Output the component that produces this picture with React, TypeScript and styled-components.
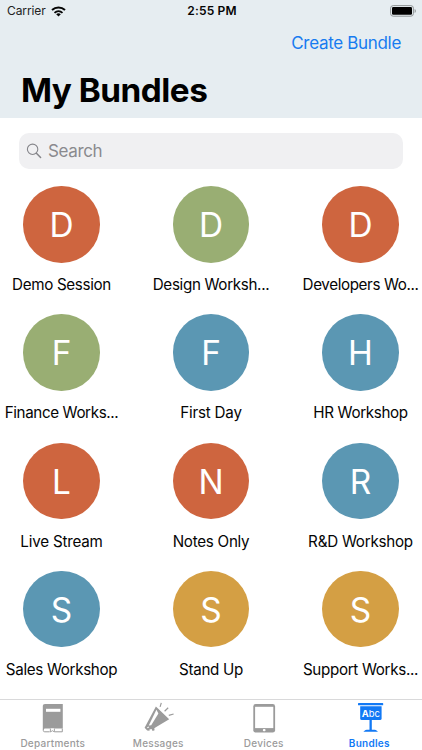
import React from "react";
import styled, { createGlobalStyle } from "styled-components";

const GlobalStyle = createGlobalStyle`
  * { box-sizing: border-box; }
  html, body { margin: 0; padding: 0; background: #fff; }
  body { font-family: Inter, "Liberation Sans", sans-serif; color: #050505; overflow: hidden; }
  button, input { font: inherit; border: 0; background: none; padding: 0; margin: 0; }
`;

const Screen = styled.div`
  width: 422px;
  height: 750px;
  display: flex;
  flex-direction: column;
  overflow: hidden;
  background: #fff;
`;

const Header = styled.header`
  height: 118px;
  flex: none;
  display: flex;
  flex-direction: column;
  background: #e6edf1;
`;

const StatusBar = styled.div`
  height: 22px;
  display: grid;
  grid-template-columns: 1fr auto 1fr;
  align-items: center;
  padding: 0 5px 0 7px;
  font-size: 12px;
  line-height: 22px;
  svg { display: block; }
`;

const Carrier = styled.div`
  display: flex;
  align-items: center;
  gap: 5px;
  letter-spacing: -0.1px;
  color: #222;
`;

const Clock = styled.div`
  font-weight: 600;
  letter-spacing: 0.15px;
  color: #050505;
`;

const BatterySlot = styled.div`
  display: flex;
  justify-content: flex-end;
`;

const NavActions = styled.div`
  height: 44px;
  display: flex;
  justify-content: flex-end;
  align-items: center;
  padding: 0 21px 2px 0;
`;

const CreateButton = styled.button`
  font-size: 17px;
  line-height: 22px;
  letter-spacing: -0.32px;
  color: #177bf0;
`;

const Title = styled.h1`
  margin: 2px 0 0 21px;
  font-size: 33.3px;
  line-height: 44px;
  font-weight: 700;
  letter-spacing: -0.5px;
  color: #000;
`;

const SearchBox = styled.label`
  flex: none;
  display: flex;
  align-items: center;
  height: 36px;
  margin: 15px 19px 0;
  padding-left: 7px;
  gap: 6px;
  border-radius: 10px;
  background: #f0f0f2;
  svg { display: block; flex: none; }
`;

const SearchInput = styled.input`
  flex: 1;
  min-width: 0;
  outline: none;
  font-size: 17px;
  letter-spacing: -0.35px;
  &::placeholder { color: #8a8a8e; opacity: 1; }
`;

const Grid = styled.main`
  flex: 1;
  min-height: 0;
  overflow: hidden;
  display: grid;
  grid-template-columns: 123px 123px 123px;
  grid-auto-rows: 128.33px;
  column-gap: 26.5px;
  padding-top: 17px;
`;

const Bundle = styled.div`
  display: flex;
  flex-direction: column;
  align-items: center;
`;

const Avatar = styled.div<{ $color: string }>`
  width: 76.5px;
  height: 76.5px;
  flex: none;
  border-radius: 50%;
  background: ${(p) => p.$color};
  color: #fff;
  font-size: 33.4px;
  font-weight: 400;
  line-height: 78.5px;
  text-align: center;
`;

const BundleName = styled.div<{ $tracking: number }>`
  margin-top: 12.5px;
  font-size: 15.2px;
  line-height: 20px;
  white-space: nowrap;
  letter-spacing: ${(p) => p.$tracking}px;
`;

const TabBar = styled.nav`
  height: 51px;
  flex: none;
  display: grid;
  grid-template-columns: repeat(4, 1fr);
  border-top: 1px solid #d9d9da;
  background: #fff;
`;

const Tab = styled.button<{ $active?: boolean }>`
  display: flex;
  flex-direction: column;
  align-items: center;
  color: ${(p) => (p.$active ? "#1279f5" : "#9b9b9b")};
  font-size: 10px;
  line-height: 12px;
  font-weight: ${(p) => (p.$active ? 600 : 500)};
  letter-spacing: 0.25px;
  svg { display: block; margin: 2px 0 2px; }
`;

const WifiIcon = () => (
  <svg width="15" height="11" viewBox="0 0 15 11" fill="none" stroke="#050505">
    <path d="M1 4.1C4.7.6 10.3.6 14 4.1" strokeWidth="2" />
    <path d="M3.5 6.8C5.8 4.7 9.2 4.7 11.5 6.8" strokeWidth="1.8" />
    <path d="M5.2 8.2c1.4-1.2 3.2-1.2 4.6 0L7.5 10.5Z" fill="#050505" stroke="none" />
  </svg>
);

const BatteryIcon = () => (
  <svg width="27" height="12" viewBox="0 0 27 12">
    <rect x="0.6" y="0.6" width="22.8" height="10.6" rx="2.6" fill="none" stroke="#8f9496" />
    <rect x="2" y="2" width="20" height="7.8" rx="1.2" fill="#000" />
    <path d="M24.6 4v4c1.7-.7 1.7-3.3 0-4Z" fill="#8f9496" />
  </svg>
);

const SearchIcon = () => (
  <svg width="16" height="16" viewBox="0 0 16 16" fill="none" stroke="#85858a">
    <circle cx="6.6" cy="6.3" r="5.2" strokeWidth="1.1" />
    <path d="m10.4 10.2 4.2 4.3" strokeWidth="1.5" strokeLinecap="round" />
  </svg>
);

const DepartmentsIcon = () => (
  <svg width="34" height="33" viewBox="0 0 34 33">
    <path d="M6.8 4.2C6.8 2.8 7.6 2 9 2h17.8v24.6H9.4c-1 0-1.5.4-1.6 1.2l-1-.6Z" fill="#9b9b9b" />
    <rect x="10" y="6.8" width="14.4" height="3" fill="#fff" />
    <path d="M7.3 27v1.5c0 .8.5 1.3 1.4 1.3h5M26.3 26.6v3.2H19" fill="none" stroke="#9b9b9b" />
    <path d="M14.4 26.6v3.4l2-1.3 2 1.3v-3.4" fill="#fff" stroke="#9b9b9b" strokeWidth=".9" />
  </svg>
);

const MessagesIcon = () => (
  <svg width="34" height="33" viewBox="0 0 34 33" fill="#9b9b9b">
    <path d="M14.9 4.6 28.2 17.3 14.4 25.4 13.3 26.2 13.6 28.2 11.6 29 10.6 27 8.4 27.6 8.6 28.8 6.2 28.6 3.6 25.8Z" />
    <path d="m15.4 7.8 2 3.6-7.2 11.8-2.4.4Z" fill="#fff" />
    <path d="m6 25.4 1.4-1 .8.9-1.5.9Z" fill="#fff" />
    <path d="m19.1 4.9 1.2-4M23.6 9.2l3.6-3.4M27.8 13.4l4.8-1.4" fill="none" stroke="#9b9b9b" strokeWidth="1.2" />
  </svg>
);

const DevicesIcon = () => (
  <svg width="34" height="33" viewBox="0 0 34 33">
    <rect x="6.3" y="2" width="21.8" height="28.6" rx="2.4" fill="#9b9b9b" />
    <rect x="8.1" y="4.8" width="18.2" height="21.3" fill="#fff" />
    <rect x="15.9" y="27.1" width="2.6" height="2.2" rx=".8" fill="#fff" />
  </svg>
);

const BoardText = styled.text`
  font-size: 9.4px;
  font-weight: 400;
  letter-spacing: 0;
  fill: #fff;
`;

const BundlesIcon = () => (
  <svg width="34" height="33" viewBox="0 0 34 33" fill="#1279f5">
    <rect x="6" y="1.1" width="25.2" height="2.2" rx=".6" />
    <path d="M8.2 4.3h21.4v12.2q0 1.6-1.6 1.6H9.8q-1.6 0-1.6-1.6Z" />
    <rect x="17.5" y="17" width="2.3" height="11" />
    <path d="M11.4 29.7c1.6-1.7 2.8-2 4.6-2h5.4c1.8 0 3 .3 4.6 2Z" />
    <BoardText x="9.8" y="14.6"><tspan fontWeight="700">A</tspan>bc</BoardText>
  </svg>
);

const RED = "#ce653f";
const GREEN = "#99ae73";
const BLUE = "#5b97b3";
const GOLD = "#d49f44";

const bundles = [
  { name: "Demo Session", color: RED, tracking: -0.33 },
  { name: "Design Worksh...", color: GREEN, tracking: -0.33 },
  { name: "Developers Wo...", color: RED, tracking: -0.38 },
  { name: "Finance Works...", color: GREEN, tracking: -0.38 },
  { name: "First Day", color: BLUE, tracking: -0.2 },
  { name: "HR Workshop", color: BLUE, tracking: -0.35 },
  { name: "Live Stream", color: RED, tracking: -0.2 },
  { name: "Notes Only", color: RED, tracking: -0.27 },
  { name: "R&D Workshop", color: BLUE, tracking: -0.25 },
  { name: "Sales Workshop", color: BLUE, tracking: -0.33 },
  { name: "Stand Up", color: GOLD, tracking: -0.33 },
  { name: "Support Works...", color: GOLD, tracking: -0.32 },
];

const tabs = [
  { label: "Departments", Icon: DepartmentsIcon },
  { label: "Messages", Icon: MessagesIcon },
  { label: "Devices", Icon: DevicesIcon },
  { label: "Bundles", Icon: BundlesIcon, active: true },
];

export default function App() {
  return (
    <Screen>
      <GlobalStyle />
      <Header>
        <StatusBar>
          <Carrier>Carrier <WifiIcon /></Carrier>
          <Clock>2:55 PM</Clock>
          <BatterySlot><BatteryIcon /></BatterySlot>
        </StatusBar>
        <NavActions><CreateButton>Create Bundle</CreateButton></NavActions>
        <Title>My Bundles</Title>
      </Header>
      <SearchBox>
        <SearchIcon />
        <SearchInput placeholder="Search" />
      </SearchBox>
      <Grid>
        {bundles.map((b) => (
          <Bundle key={b.name}>
            <Avatar $color={b.color}>{b.name[0]}</Avatar>
            <BundleName $tracking={b.tracking}>{b.name}</BundleName>
          </Bundle>
        ))}
      </Grid>
      <TabBar>
        {tabs.map(({ label, Icon, active }) => (
          <Tab key={label} $active={active}>
            <Icon />
            {label}
          </Tab>
        ))}
      </TabBar>
    </Screen>
  );
}
